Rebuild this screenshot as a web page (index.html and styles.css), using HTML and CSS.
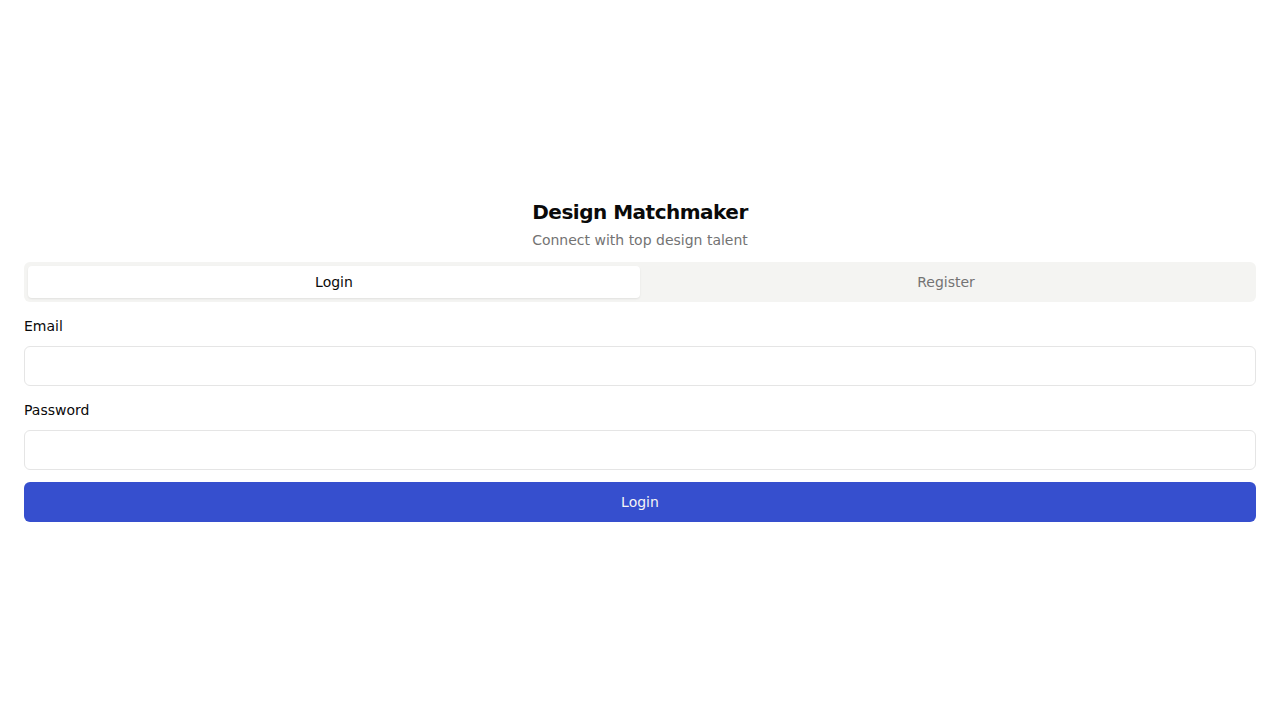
FILE: index.html
```html
<!DOCTYPE html>
<html lang="en">
<head>
<meta charset="utf-8">
<title>Design Matchmaker</title>
<link rel="stylesheet" href="styles.css">
</head>
<body>
<main class="page">
  <section class="card">
    <header class="head">
      <h1 class="title">Design Matchmaker</h1>
      <p class="subtitle">Connect with top design talent</p>
    </header>
    <div class="tabs">
      <button class="tab active">Login</button>
      <button class="tab">Register</button>
    </div>
    <form class="form">
      <div class="field">
        <label class="label">Email</label>
        <input class="input" type="email">
      </div>
      <div class="field">
        <label class="label">Password</label>
        <input class="input" type="password">
      </div>
      <button class="submit" type="button">Login</button>
    </form>
  </section>
</main>
</body>
</html>
```
FILE: styles.css
```css
* { box-sizing: border-box; }
html, body { margin: 0; padding: 0; }
body {
  font-family: "DejaVu Sans", sans-serif;
  color: #0a0a0a;
  background: #ffffff;
}
.page {
  min-height: 720px;
  display: flex;
  align-items: center;
  padding: 0 24px;
}
.card { width: 100%; }
.head {
  display: flex;
  flex-direction: column;
  align-items: center;
  gap: 4px;
}
.title {
  margin: 0;
  font-size: 20px;
  line-height: 28px;
  font-weight: 700;
  letter-spacing: -0.025em;
}
.subtitle {
  margin: 0;
  font-size: 14px;
  line-height: 20px;
  color: #737373;
}
.tabs {
  margin-top: 12px;
  height: 40px;
  background: #f4f4f2;
  border-radius: 6px;
  padding: 4px;
  display: grid;
  grid-template-columns: 1fr 1fr;
}
.tab {
  border: none;
  background: transparent;
  font-family: inherit;
  font-size: 14px;
  color: #737373;
  border-radius: 4px;
  padding: 0;
}
.tab.active {
  background: #ffffff;
  color: #0a0a0a;
  box-shadow: 0 1px 2px rgba(0,0,0,0.08);
}
.form {
  margin-top: 14px;
  display: flex;
  flex-direction: column;
  gap: 14px;
}
.field {
  display: flex;
  flex-direction: column;
  gap: 10px;
}
.label {
  font-size: 14px;
  line-height: 20px;
  color: #0a0a0a;
}
.input {
  height: 40px;
  border: 1px solid #e5e5e5;
  border-radius: 6px;
  background: #fff;
  font-family: inherit;
  font-size: 14px;
  padding: 0 12px;
}
.submit {
  margin-top: -2px;
  height: 40px;
  border: none;
  border-radius: 6px;
  background: #364fce;
  color: #f5f5f5;
  font-family: inherit;
  font-size: 14px;
}
```
